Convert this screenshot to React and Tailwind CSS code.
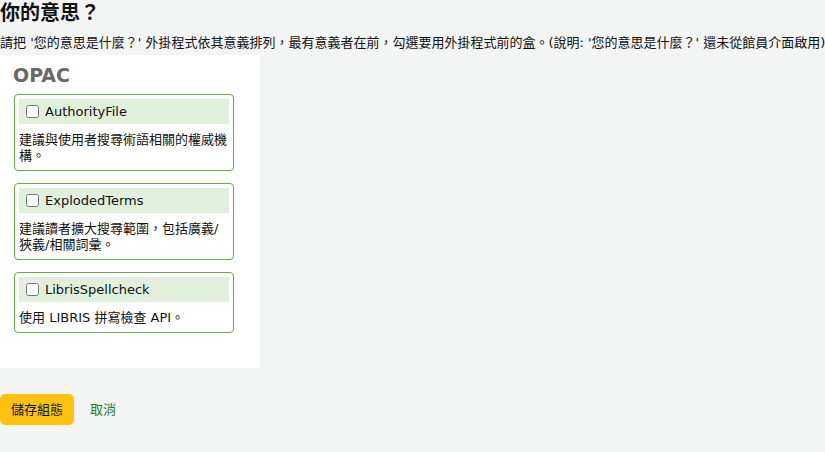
import React from 'react';

const plugins = [
    { name: 'AuthorityFile', desc: '建議與使用者搜尋術語相關的權威機構。' },
    { name: 'ExplodedTerms', desc: '建議讀者擴大搜尋範圍，包括廣義/狹義/相關詞彙。' },
    { name: 'LibrisSpellcheck', desc: '使用 LIBRIS 拼寫檢查 API。' },
];

const PluginBox = ({ name, desc }) => (
    <div className="w-[220px] rounded border border-[#6ca94a] bg-white p-1 pb-[6px]">
        <label className="flex h-[25px] items-center gap-[6px] bg-[#e1f0dc] pl-[7px] text-[13px] text-[#111]">
            <input type="checkbox" className="m-0 h-[13px] w-[13px]" />
            <span>{name}</span>
        </label>
        <p className="mt-[8px] text-[13px] leading-[16px] text-[#111]">{desc}</p>
    </div>
);

const App = () => {
    return (
        <div
            className="h-[452px] overflow-hidden bg-[#f3f4f4] text-[#111]"
            style={{ fontFamily: '"DejaVu Sans", "Noto Sans CJK TC", sans-serif' }}
        >
            <h1 className="h-[30px] text-[20px] font-bold leading-[26px]">你的意思？</h1>
            <p className="h-[25px] whitespace-nowrap text-[13px] leading-[26px]">
                請把 '您的意思是什麼？' 外掛程式依其意義排列，最有意義者在前，勾選要用外掛程式前的盒。(說明: '您的意思是什麼？' 還未從館員介面啟用)
            </p>
            <div className="flex h-[313px] w-[260px] flex-col bg-white px-[13px]">
                <h3 className="mt-[8px] h-[31px] text-[19px] font-bold leading-[24px] text-[#696969]">OPAC</h3>
                <div className="flex flex-col gap-3 pl-[1px]">
                    {plugins.map((p) => (
                        <PluginBox key={p.name} {...p} />
                    ))}
                </div>
            </div>
            <div className="mt-[26px] flex items-center gap-[16px]">
                <button className="h-[31px] rounded-[5px] bg-[#ffc20e] px-[11px] text-[13px] text-[#111]">儲存組態</button>
                <a href="#" className="text-[13px] text-[#267d26]">取消</a>
            </div>
        </div>
    );
};

export default App;
